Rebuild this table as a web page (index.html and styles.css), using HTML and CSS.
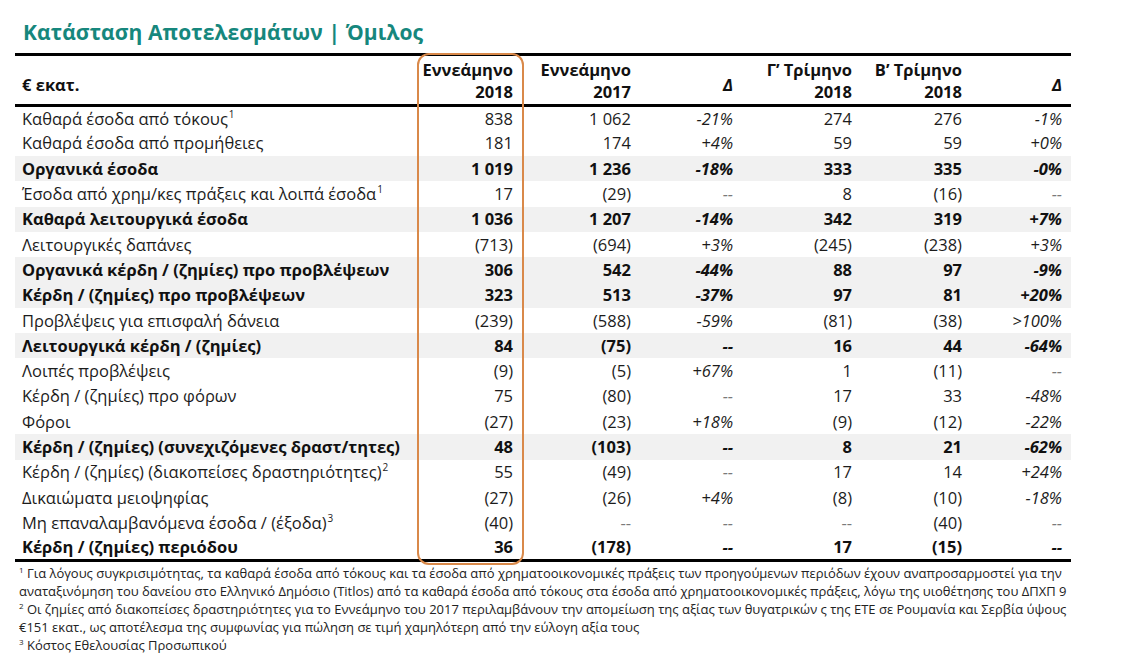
FILE: index.html
```html
<!DOCTYPE html>
<html lang="el">
<head>
<meta charset="utf-8">
<title>Κατάσταση Αποτελεσμάτων | Όμιλος</title>
<link rel="stylesheet" href="styles.css">
</head>
<body>
<div class="page">
  <h1 class="title">Κατάσταση Αποτελεσμάτων | Όμιλος</h1>
  <div class="table-wrap">
    <table class="fin">
      <thead>
        <tr>
          <th class="label single">€ εκατ.</th>
          <th class="num">Εννεάμηνο<br>2018</th>
          <th class="num">Εννεάμηνο<br>2017</th>
          <th class="num single delta">Δ</th>
          <th class="num">Γ’ Τρίμηνο<br>2018</th>
          <th class="num">Β’ Τρίμηνο<br>2018</th>
          <th class="num single delta">Δ</th>
        </tr>
      </thead>
      <tbody>
        <tr><td class="label">Καθαρά έσοδα από τόκους<sup>1</sup></td><td>838</td><td>1 062</td><td class="pct">-21%</td><td>274</td><td>276</td><td class="pct">-1%</td></tr>
        <tr><td class="label">Καθαρά έσοδα από προμήθειες</td><td>181</td><td>174</td><td class="pct">+4%</td><td>59</td><td>59</td><td class="pct">+0%</td></tr>
        <tr class="bold"><td class="label">Οργανικά έσοδα</td><td>1 019</td><td>1 236</td><td class="pct">-18%</td><td>333</td><td>335</td><td class="pct">-0%</td></tr>
        <tr><td class="label">Έσοδα από χρημ/κες πράξεις και λοιπά έσοδα<sup>1</sup></td><td>17</td><td>(29)</td><td class="pct na">--</td><td>8</td><td>(16)</td><td class="pct na">--</td></tr>
        <tr class="bold"><td class="label">Καθαρά λειτουργικά έσοδα</td><td>1 036</td><td>1 207</td><td class="pct">-14%</td><td>342</td><td>319</td><td class="pct">+7%</td></tr>
        <tr><td class="label">Λειτουργικές δαπάνες</td><td>(713)</td><td>(694)</td><td class="pct">+3%</td><td>(245)</td><td>(238)</td><td class="pct">+3%</td></tr>
        <tr class="bold"><td class="label">Οργανικά κέρδη / (ζημίες) προ προβλέψεων</td><td>306</td><td>542</td><td class="pct">-44%</td><td>88</td><td>97</td><td class="pct">-9%</td></tr>
        <tr class="bold"><td class="label">Κέρδη / (ζημίες) προ προβλέψεων</td><td>323</td><td>513</td><td class="pct">-37%</td><td>97</td><td>81</td><td class="pct">+20%</td></tr>
        <tr><td class="label">Προβλέψεις για επισφαλή δάνεια</td><td>(239)</td><td>(588)</td><td class="pct">-59%</td><td>(81)</td><td>(38)</td><td class="pct">&gt;100%</td></tr>
        <tr class="bold"><td class="label">Λειτουργικά κέρδη / (ζημίες)</td><td>84</td><td>(75)</td><td class="pct">--</td><td>16</td><td>44</td><td class="pct">-64%</td></tr>
        <tr><td class="label">Λοιπές προβλέψεις</td><td>(9)</td><td>(5)</td><td class="pct">+67%</td><td>1</td><td>(11)</td><td class="pct na">--</td></tr>
        <tr><td class="label">Κέρδη / (ζημίες) προ φόρων</td><td>75</td><td>(80)</td><td class="pct na">--</td><td>17</td><td>33</td><td class="pct">-48%</td></tr>
        <tr><td class="label">Φόροι</td><td>(27)</td><td>(23)</td><td class="pct">+18%</td><td>(9)</td><td>(12)</td><td class="pct">-22%</td></tr>
        <tr class="bold"><td class="label">Κέρδη / (ζημίες) (συνεχιζόμενες δραστ/τητες)</td><td>48</td><td>(103)</td><td class="pct">--</td><td>8</td><td>21</td><td class="pct">-62%</td></tr>
        <tr><td class="label">Κέρδη / (ζημίες) (διακοπείσες δραστηριότητες)<sup>2</sup></td><td>55</td><td>(49)</td><td class="pct na">--</td><td>17</td><td>14</td><td class="pct">+24%</td></tr>
        <tr><td class="label">Δικαιώματα μειοψηφίας</td><td>(27)</td><td>(26)</td><td class="pct">+4%</td><td>(8)</td><td>(10)</td><td class="pct">-18%</td></tr>
        <tr><td class="label">Μη επαναλαμβανόμενα έσοδα / (έξοδα)<sup>3</sup></td><td>(40)</td><td class="na">--</td><td class="pct na">--</td><td class="na">--</td><td>(40)</td><td class="pct na">--</td></tr>
        <tr class="bold last"><td class="label">Κέρδη / (ζημίες) περιόδου</td><td>36</td><td>(178)</td><td class="pct">--</td><td>17</td><td>(15)</td><td class="pct">--</td></tr>
      </tbody>
    </table>
    <div class="highlight"></div>
  </div>
  <div class="notes">
    <p><sup>1</sup> Για λόγους συγκρισιμότητας, τα καθαρά έσοδα από τόκους και τα έσοδα από χρηματοοικονομικές πράξεις των προηγούμενων περιόδων έχουν αναπροσαρμοστεί για την<br>αναταξινόμηση του δανείου στο Ελληνικό Δημόσιο (Titlos) από τα καθαρά έσοδα από τόκους στα έσοδα από χρηματοοικονομικές πράξεις, λόγω της υιοθέτησης του ΔΠΧΠ 9</p>
    <p><sup>2</sup> Οι ζημίες από διακοπείσες δραστηριότητες για το Εννεάμηνο του 2017 περιλαμβάνουν την απομείωση της αξίας των θυγατρικών ς της ΕΤΕ σε Ρουμανία και Σερβία ύψους<br>€151 εκατ., ως αποτέλεσμα της συμφωνίας για πώληση σε τιμή χαμηλότερη από την εύλογη αξία τους</p>
    <p><sup>3</sup> Κόστος Εθελουσίας Προσωπικού</p>
  </div>
</div>
</body>
</html>
```
FILE: styles.css
```css
* { box-sizing: border-box; }
html, body { margin: 0; padding: 0; background: #ffffff; }
body {
  font-family: "Open Sans", "Noto Sans", "DejaVu Sans", sans-serif;
  color: #1c1c1c;
}
.page {
  padding: 17px 0 0 15px;
  width: 1124px;
}
.title {
  margin: 0 0 6px 8px;
  font-size: 21px;
  line-height: 30px;
  font-weight: 700;
  color: #16877d;
  letter-spacing: 0.1px;
}
.table-wrap {
  position: relative;
  width: 1056px;
}
.fin {
  width: 1056px;
  border-collapse: collapse;
  table-layout: fixed;
  font-size: 16.5px;
}
.fin thead tr {
  border-top: 3px solid #000;
  border-bottom: 3px solid #000;
  height: 51px;
}
.fin th {
  font-weight: 700;
  line-height: 22px;
  vertical-align: bottom;
  padding: 0 10px 1px 0;
  text-align: right;
  color: #111;
}
.fin th.single { padding-bottom: 8px; }
.fin th.label { text-align: left; padding-left: 7px; width: 402px; }
.fin th:nth-child(2) { width: 106px; }
.fin th:nth-child(3) { width: 118px; }
.fin th:nth-child(4) { width: 102px; }
.fin th:nth-child(5) { width: 119px; }
.fin th:nth-child(6) { width: 110px; }
.fin th:nth-child(7) { width: 99px; padding-right: 9px; }
.fin th.delta { font-style: italic; }
.fin tbody tr { height: 25.3px; }
.fin td {
  padding: 0 10px 0 0;
  text-align: right;
  white-space: nowrap;
  line-height: 20px;
  vertical-align: middle;
}
.fin td:last-child { padding-right: 9px; }
.fin td.label { text-align: left; padding-left: 7px; }
.fin td.pct { font-style: italic; }
.fin td.na { color: #7a7a7a; }
.fin tr.bold td { font-weight: 700; color: #111; }
.fin tr.bold { background: #f1f1f1; }
.fin tr.last { background: transparent; border-bottom: 3px solid #000; }
.fin sup { font-size: 10px; line-height: 0; vertical-align: 7px; margin-left: 1px; }
.highlight {
  position: absolute;
  left: 402px;
  top: 0;
  width: 107px;
  height: 512px;
  border: 2px solid #d9894a;
  border-radius: 12px;
  pointer-events: none;
}
.notes {
  margin-top: 2px;
  font-size: 13px;
  line-height: 18px;
  color: #222;
  white-space: nowrap;
}
.notes p { margin: 0 0 0 4px; }
.notes sup { font-size: 8px; line-height: 0; vertical-align: 5px; }
```
